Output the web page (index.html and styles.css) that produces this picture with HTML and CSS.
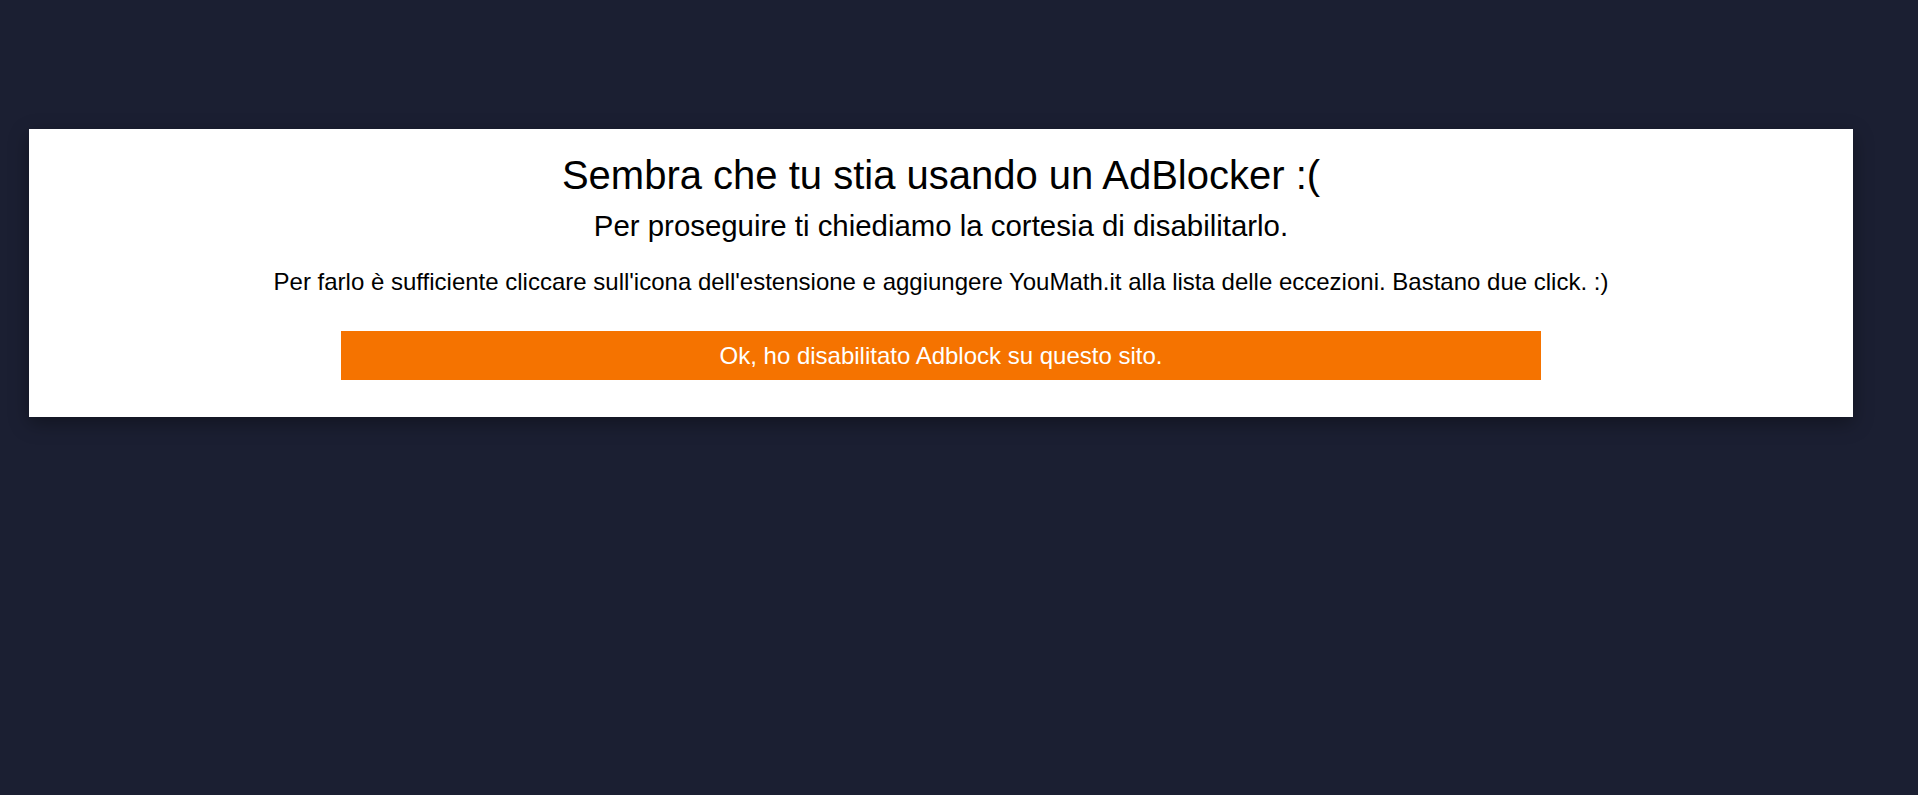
FILE: index.html
```html
<!DOCTYPE html>
<html lang="it">
<head>
    <meta charset="UTF-8">
    <meta name="viewport" content="width=device-width, initial-scale=1.0">
    <title>YouMath - AdBlock</title>
    <link rel="stylesheet" href="styles.css">
</head>
<body>
    <div class="overlay">
        <div class="notice">
            <h1>Sembra che tu stia usando un AdBlocker :(</h1>
            <h2>Per proseguire ti chiediamo la cortesia di disabilitarlo.</h2>
            <p>Per farlo è sufficiente cliccare sull'icona dell'estensione e aggiungere YouMath.it alla lista delle eccezioni. Bastano due click. :)</p>
            <button class="notice-button" type="button">Ok, ho disabilitato Adblock su questo sito.</button>
        </div>
    </div>
</body>
</html>
```

FILE: styles.css
```css
body {
    margin: 0;
    background: #1b1f32;
    font-family: "Liberation Sans", Arial, sans-serif;
    color: #000;
}

/* dark overlay */
.overlay {
    min-height: 795px;
    padding: 129px 0 0 29px;
    box-sizing: border-box;
}

/* white notice box */
.notice {
    width: 1824px;
    background: #fff;
    padding: 23px 0 37px;
    text-align: center;
    box-shadow: 0 6px 18px rgba(0, 0, 0, 0.35);
}

.notice h1 {
    font-size: 40px;
    font-weight: normal;
    line-height: 46px;
    margin: 0;
}

.notice h2 {
    font-size: 29.4px;
    font-weight: normal;
    line-height: 33px;
    margin: 11px 0 0;
}

.notice p {
    font-size: 24px;
    line-height: 28px;
    margin: 26px 0 0;
}

.notice-button {
    display: block;
    width: 1200px;
    height: 49px;
    margin: 35px auto 0;
    padding: 0;
    border: none;
    background: #f57300;
    color: #fff;
    font-family: inherit;
    font-size: 24px;
    cursor: pointer;
}
```
